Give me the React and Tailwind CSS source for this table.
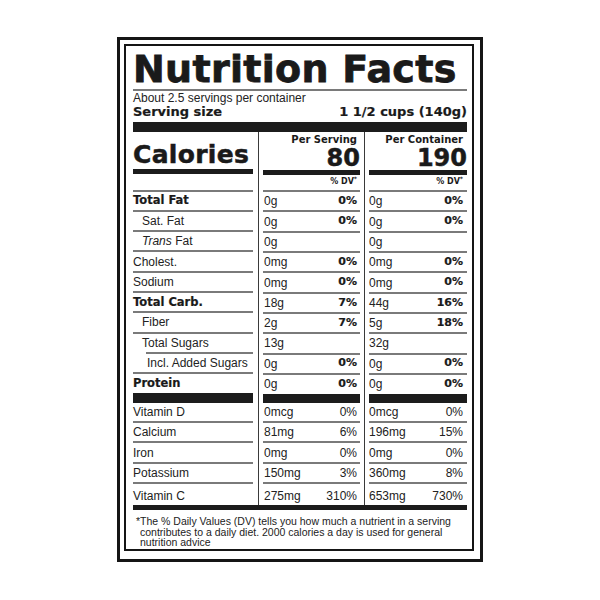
import React from 'react';

const heavy = "font-['DejaVu_Sans',sans-serif] font-bold";
const sans = "font-['Liberation_Sans',Arial,sans-serif]";

const nutrients = [
  { label: 'Total Fat', bold: true, s: ['0g', '0%'], c: ['0g', '0%'] },
  { label: 'Sat. Fat', pad: 'pl-[9px]', s: ['0g', '0%'], c: ['0g', '0%'] },
  {
    label: (
      <>
        <i>Trans</i> Fat
      </>
    ),
    pad: 'pl-[9px]',
    s: ['0g', ''],
    c: ['0g', ''],
  },
  { label: 'Cholest.', s: ['0mg', '0%'], c: ['0mg', '0%'] },
  { label: 'Sodium', s: ['0mg', '0%'], c: ['0mg', '0%'] },
  { label: 'Total Carb.', bold: true, s: ['18g', '7%'], c: ['44g', '16%'] },
  { label: 'Fiber', pad: 'pl-[9px]', s: ['2g', '7%'], c: ['5g', '18%'] },
  { label: 'Total Sugars', pad: 'pl-[9px]', s: ['13g', ''], c: ['32g', ''], shortLine: true },
  { label: 'Incl. Added Sugars', pad: 'pl-[14px]', s: ['0g', '0%'], c: ['0g', '0%'] },
];

const protein = { label: 'Protein', s: ['0g', '0%'], c: ['0g', '0%'] };

const vitamins = [
  { label: 'Vitamin D', s: ['0mcg', '0%'], c: ['0mcg', '0%'] },
  { label: 'Calcium', s: ['81mg', '6%'], c: ['196mg', '15%'] },
  { label: 'Iron', s: ['0mg', '0%'], c: ['0mg', '0%'] },
  { label: 'Potassium', s: ['150mg', '3%'], c: ['360mg', '8%'] },
  { label: 'Vitamin C', s: ['275mg', '310%'], c: ['653mg', '730%'] },
];

const Row = ({ children, line = true, shortLine = false, className = '' }) => (
  <div>
    <div className={`flex h-[18.3px] items-center ${className}`}>{children}</div>
    {line && <div className={`h-[2px] bg-[#7a7a7a] ${shortLine ? 'ml-[13px]' : ''}`} />}
  </div>
);

const Bar = ({ h = 'h-[10px]' }) => <div className={`${h} bg-[#1c1c1c]`} />;

const LabelColumn = () => (
  <div className="flex w-[120px] flex-col">
    <div className="flex h-[39px] flex-col justify-end pb-[2px]">
      <div
        className={`${heavy} text-[25px] leading-[25px] tracking-[0.3px] text-[#1a1a1a] [-webkit-text-stroke:0.5px_#1a1a1a]`}
      >
        Calories
      </div>
    </div>
    <Bar h="h-[5px]" />
    <div className="h-[17px]" />
    <div className="h-[2px] bg-[#7a7a7a]" />
    {nutrients.map((n, i) => (
      <Row key={i} shortLine={n.shortLine} className={n.pad || ''}>
        <span
          className={
            n.bold
              ? `${heavy} text-[11.5px] text-[#1a1a1a] [-webkit-text-stroke:0.2px_#1a1a1a]`
              : `${sans} text-[12px] text-[#222]`
          }
        >
          {n.label}
        </span>
      </Row>
    ))}
    <div className="flex h-[20.3px] items-center">
      <span className={`${heavy} text-[11.5px] text-[#1a1a1a] [-webkit-text-stroke:0.2px_#1a1a1a]`}>
        {protein.label}
      </span>
    </div>
    <Bar />
    {vitamins.slice(0, 4).map((v) => (
      <Row key={v.label}>
        <span className={`${sans} text-[12px] text-[#222]`}>{v.label}</span>
      </Row>
    ))}
    <div className="flex flex-1 items-center pt-[3px]">
      <span className={`${sans} text-[12px] text-[#222]`}>{vitamins[4].label}</span>
    </div>
  </div>
);

const ValueColumn = ({ width, title, total, pick, padL, padR }) => (
  <div className={`flex ${width} flex-col`}>
    <div className="flex h-[39px] flex-col items-end pt-[2px]">
      <div className={`${heavy} ${padR} text-[10px] leading-[11px] text-[#1a1a1a]`}>{title}</div>
      <div
        className={`${heavy} mt-[1px] text-[24px] leading-[24px] text-[#1a1a1a] [-webkit-text-stroke:0.5px_#1a1a1a]`}
      >
        {total}
      </div>
    </div>
    <Bar h="h-[5px]" />
    <div className={`flex h-[17px] items-center justify-end ${padR}`}>
      <span className={`${heavy} text-[8px] text-[#1a1a1a]`}>
        % DV<sup className="text-[6px]">*</sup>
      </span>
    </div>
    <div className="h-[2px] bg-[#7a7a7a]" />
    {nutrients.map((n, i) => (
      <Row key={i} className={`justify-between ${padL} ${padR}`}>
        <span className={`${sans} text-[12px] text-[#222]`}>{pick(n)[0]}</span>
        <span className={`${heavy} text-[11px] text-[#1a1a1a] [-webkit-text-stroke:0.2px_#1a1a1a]`}>
          {pick(n)[1]}
        </span>
      </Row>
    ))}
    <div className={`flex h-[20.3px] items-center justify-between ${padL} ${padR}`}>
      <span className={`${sans} text-[12px] text-[#222]`}>{pick(protein)[0]}</span>
      <span className={`${heavy} text-[11px] text-[#1a1a1a] [-webkit-text-stroke:0.2px_#1a1a1a]`}>
        {pick(protein)[1]}
      </span>
    </div>
    <Bar />
    {vitamins.slice(0, 4).map((v) => (
      <Row key={v.label} className={`justify-between ${padL} ${padR}`}>
        <span className={`${sans} text-[12px] text-[#222]`}>{pick(v)[0]}</span>
        <span className={`${sans} text-[12px] text-[#222]`}>{pick(v)[1]}</span>
      </Row>
    ))}
    <div className={`flex flex-1 items-center justify-between pt-[3px] ${padL} ${padR}`}>
      <span className={`${sans} text-[12px] text-[#222]`}>{pick(vitamins[4])[0]}</span>
      <span className={`${sans} text-[12px] text-[#222]`}>{pick(vitamins[4])[1]}</span>
    </div>
  </div>
);

const Divider = ({ w }) => (
  <div className={`flex ${w} justify-center`}>
    <div className="w-px bg-[#3a3a3a]" />
  </div>
);

export default function App() {
  return (
    <div className="flex min-h-[600px] justify-center bg-white pt-[37px]">
      <div className="h-[525px] w-[366px] border-[3px] border-[#151515] pt-[4px] pr-[6px] pb-[8px] pl-[4px]">
        <div className="flex h-full flex-col border-2 border-[#151515] pr-[5px] pl-[7px] pt-[4px]">
          <h1
            className={`${heavy} text-[38px] leading-[38px] tracking-[0.3px] text-[#1a1a1a] [-webkit-text-stroke:0.8px_#1a1a1a]`}
          >
            Nutrition Facts
          </h1>
          <div className="mt-[1px] h-[2px] bg-[#7a7a7a]" />
          <p className={`${sans} mt-[1px] text-[12px] leading-[13px] text-[#222]`}>
            About 2.5 servings per container
          </p>
          <div
            className={`${heavy} flex justify-between text-[13px] leading-[14px] text-[#1a1a1a] [-webkit-text-stroke:0.2px_#1a1a1a]`}
          >
            <span>Serving size</span>
            <span>1 1/2 cups (140g)</span>
          </div>
          <div className="mt-[3px]">
            <Bar />
          </div>

          <div className="flex h-[373px]">
            <LabelColumn />
            <Divider w="w-[10px]" />
            <ValueColumn
              width="w-[97px]"
              title="Per Serving"
              total="80"
              pick={(n) => n.s}
              padL="pl-[1px]"
              padR="pr-[3px]"
            />
            <Divider w="w-[9px]" />
            <ValueColumn
              width="w-[98px]"
              title="Per Container"
              total="190"
              pick={(n) => n.c}
              padL="pl-0"
              padR="pr-[4px]"
            />
          </div>

          <Bar h="h-[5px]" />
          <p
            className={`${sans} pt-[6px] pl-[7px] text-[10.5px] leading-[10.5px] text-[#222] [text-indent:-4px]`}
          >
            *The % Daily Values (DV) tells you how much a nutrient in a serving contributes to a daily
            diet. 2000 calories a day is used for general nutrition advice
          </p>
        </div>
      </div>
    </div>
  );
}
